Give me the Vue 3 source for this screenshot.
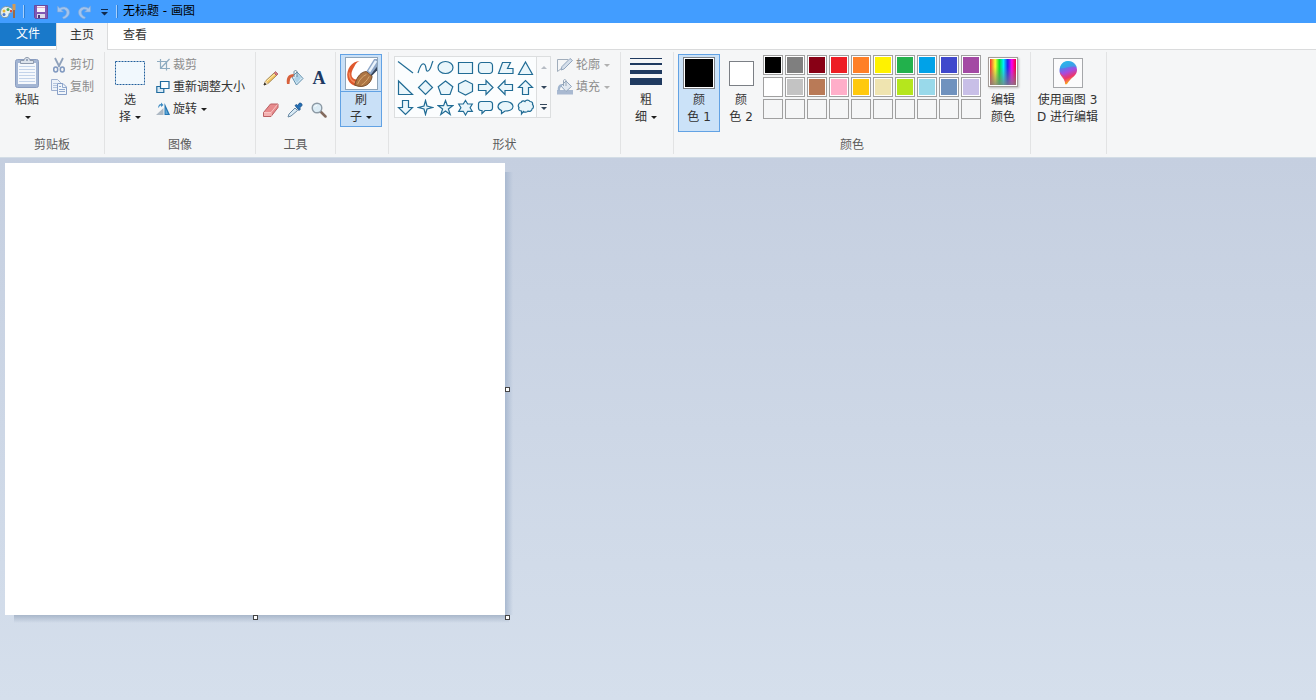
<script setup>
import { ref } from 'vue'

const shapes = [
  { name: '直线', d: 'M1 2.500L16 14' },
  { name: '曲线', d: 'M1 14C3 7 5 4 7 5C10 6 8 13 11 12C14 11 14 6 16 2' },
  { name: '椭圆形', d: 'M1 8.5a7.5 6 0 1 0 15 0a7.5 6 0 1 0 -15 0z' },
  { name: '矩形', d: 'M1.5 3.5h14v11h-14z' },
  { name: '圆角矩形', d: 'M4.5 3.5h8a3 3 0 0 1 3 3v5a3 3 0 0 1 -3 3h-8a3 3 0 0 1 -3 -3v-5a3 3 0 0 1 3 -3z' },
  { name: '多边形', d: 'M5.5 3.5h8l-3 6h5.5v5h-14.5z' },
  { name: '三角形', d: 'M8.5 3L15.5 15.5H1.5z' },
  { name: '直角三角形', d: 'M1.5 2v13.500h14z' },
  { name: '菱形', d: 'M8.500 1.500l7 7l-7 7l-7 -7z' },
  { name: '五边形', d: 'M8.500 2l7.300 5.700l-2.800 7.800h-9l-2.800 -7.800z' },
  { name: '六边形', d: 'M8.500 1.500l7 3.500v7.500l-7 3.500l-7 -3.500v-7.500z' },
  { name: '右箭头', d: 'M1.500 5.500h7.500v-4l7 7l-7 7v-4h-7.500z' },
  { name: '左箭头', d: 'M15.500 5.500h-7.500v-4l-7 7l7 7v-4h7.500z' },
  { name: '上箭头', d: 'M5.500 15.500v-7h-4l7 -7l7 7h-4v7z' },
  { name: '下箭头', d: 'M5.500 1.500v7h-4l7 7l7 -7h-4v-7z' },
  { name: '四角星形', d: 'M8.500 1.500l1.500 5.500l5.500 1.500l-5.500 1.500l-1.500 5.500l-1.500 -5.500l-5.500 -1.500l5.500 -1.500z' },
  { name: '五角星形', d: 'M8.500 1.500l1.900 5.200h5.300l-4.300 3.300l1.800 5.500l-4.700 -3.400l-4.700 3.400l1.800 -5.500l-4.300 -3.300h5.300z' },
  { name: '六角星形', d: 'M8.500 1.500l2.200 3.500h4.600l-2.200 3.700l2.200 3.600h-4.600l-2.200 3.700l-2.200 -3.700h-4.600l2.200 -3.600l-2.200 -3.700h4.600z' },
  { name: '圆角矩形标注', d: 'M4 2.500h9a2.500 2.500 0 0 1 2.500 2.500v4a2.500 2.500 0 0 1 -2.500 2.500h-5l-3 3v-3h-1a2.500 2.500 0 0 1 -2.500 -2.500v-4a2.500 2.500 0 0 1 2.500 -2.500z' },
  { name: '椭圆形标注', d: 'M4.500 14.500v-3C2 10.500 1 9 1 7.500C1 4.500 4.500 2.500 8.500 2.500S16 4.500 16 7.500C16 10.500 12 12 8 12z' },
  { name: '云形标注', d: 'M4 3.500c1 -2 3 -2 4 -1c1 -2 4 -1.500 5 0c2 0 3 1.500 2.500 3c1.500 1.500 1 4 -.5 4.500c0 2 -2.500 3 -4 2c-1 1.500 -3.500 1.500 -4.500 .5l-2 2.500v-3c-2 0 -3.500 -1.500 -2.500 -3.500c-1.500 -1.500 -.5 -4.500 2 -5z' },
]

const palette = [
  '#000000', '#7f7f7f', '#880015', '#ed1c24', '#ff7f27', '#fff200', '#22b14c', '#00a2e8', '#3f48cc', '#a349a4',
  '#ffffff', '#c3c3c3', '#b97a57', '#ffaec9', '#ffc90e', '#efe4b0', '#b5e61d', '#99d9ea', '#7092be', '#c8bfe7',
  null, null, null, null, null, null, null, null, null, null,
]

const color1 = ref('#000000')
const color2 = ref('#ffffff')
const active = ref(1)

function pick(c) {
  if (!c) return
  if (active.value === 1) color1.value = c
  else color2.value = c
}
</script>

<template>
  <div class="app">
    <header class="titlebar">
      <svg class="logo" width="17" height="17" viewBox="0 0 17 17">
        <path d="M1 12C-1 6 4 2 9 4C14 5 14 10 10 10C8 10 10 14 6 14.500C3 15 2 14 1 12z" fill="#e4eef3" stroke="#7e98a4" />
        <circle cx="4" cy="8" r="1.500" fill="#e8b83a" /><circle cx="8" cy="6.500" r="1.500" fill="#48a85a" />
        <circle cx="4" cy="11.500" r="1.500" fill="#4b79cc" /><circle cx="11" cy="8" r="1.200" fill="#da5040" />
        <path d="M12.500 1h3v6h-3z" fill="#d39a55" /><path d="M13 7h2v8h-2z" fill="#9c6a45" />
      </svg>
      <span class="bar"></span>
      <button class="quick" aria-label="保存">
        <svg width="16" height="16" viewBox="0 0 16 16"><path d="M1.500 1.500h13v13h-12l-1 -1z" fill="#8159b5" stroke="#6a4a9c" /><path d="M4 2h8v6h-8z" fill="#f6f4fb" /><path d="M4 3h8v1h-8z" fill="#e4a4c4" /><path d="M4 10h8v4h-8z" fill="#ddd9e8" /><path d="M5 11h2v3h-2z" fill="#4d3b7c" /></svg>
      </button>
      <button class="quick" aria-label="撤消">
        <svg width="16" height="16" viewBox="0 0 16 16"><path d="M2.500 2v6h6L6.300 5.900C9 4.500 11.500 6 11.500 8.500C11.500 11 9.500 12.500 7.500 13.200L8.500 15C12 14 14.500 11.500 14.500 8.300C14.500 3.800 9 1.300 4.700 4.200z" fill="#a4c4ec" stroke="#7ba6da" stroke-width=".6" /></svg>
      </button>
      <button class="quick" aria-label="重做">
        <svg width="16" height="16" viewBox="0 0 16 16"><path d="M13.500 2v6h-6l2.200 -2.100C7 4.500 4.500 6 4.500 8.500C4.500 11 6.500 12.500 8.500 13.200L7.500 15C4 14 1.500 11.500 1.500 8.300C1.500 3.800 7 1.300 11.300 4.200z" fill="#a4c4ec" stroke="#7ba6da" stroke-width=".6" /></svg>
      </button>
      <button class="quick more" aria-label="自定义快速访问工具栏">
        <svg width="9" height="9" viewBox="0 0 9 9"><path d="M1 2h7v1h-7zM1 5h7L4.500 8.500z" fill="#102a4c" /></svg>
      </button>
      <span class="bar"></span>
      <h1 class="title">无标题 - 画图</h1>
    </header>

    <nav class="tabs">
      <button class="tab file">文件</button>
      <button class="tab current">主页</button>
      <button class="tab">查看</button>
    </nav>

    <div class="ribbon">
      <section class="group clipboard">
        <div class="body">
          <button class="big paste">
            <svg width="32" height="32" viewBox="0 0 32 32">
              <rect x="4.500" y="3.500" width="23" height="28" rx="2" fill="#a3b5d3" stroke="#8a9dc0" />
              <path d="M7 7h18v21h-18z" fill="#f5f8fc" />
              <path d="M8 10.500h16M8 13.500h16M8 16.500h16M8 19.500h16M8 22.500h16M8 25.500h16" stroke="#c3d3ea" />
              <path d="M9.500 7.500v-3h3.500c0 -4 6 -4 6 0h3.500v3z" fill="#dce3ec" stroke="#8e9aae" /><circle cx="16" cy="4" r="1" fill="#8494ae" />
            </svg>
            <span>粘贴</span>
            <span class="tick"><i class="arrow"></i></span>
          </button>
          <div class="stack">
            <button class="small" disabled>
              <svg width="16" height="16" viewBox="0 0 16 16"><path d="M4 1l4.500 9M12 1L7.500 10" stroke="#8fa1bb" stroke-width="1.800" fill="none" /><ellipse cx="4.700" cy="12.500" rx="2" ry="2.500" fill="none" stroke="#8199c0" stroke-width="1.500" /><ellipse cx="11.300" cy="12.500" rx="2" ry="2.500" fill="none" stroke="#8199c0" stroke-width="1.500" /></svg>
              <span>剪切</span>
            </button>
            <button class="small" disabled>
              <svg width="16" height="16" viewBox="0 0 16 16"><path d="M.5 .5h6l3 3v8h-9z" fill="#edf2f9" stroke="#9dafcf" /><path d="M2 4.500h4M2 6.500h4M2 8.500h4" stroke="#b6c6df" /><path d="M6.500 4.500h5.500l3.500 3.500v7.500h-9z" fill="#f1f5fa" stroke="#879fc7" /><path d="M11.500 4.500v4h4M8 10.500h6M8 12.500h6M8 7.500h2" stroke="#91a9ce" fill="none" /></svg>
              <span>复制</span>
            </button>
          </div>
        </div>
        <h2>剪贴板</h2>
      </section>

      <section class="group image">
        <div class="body">
          <button class="big select">
            <svg width="32" height="32" viewBox="0 0 32 32"><rect x="1.500" y="5.500" width="29" height="23" fill="#f1f8fd" stroke="#215f9c" stroke-dasharray="2 1" /></svg>
            <span>选</span>
            <span class="tick">择<i class="arrow"></i></span>
          </button>
          <div class="stack">
            <button class="small" disabled>
              <svg width="16" height="16" viewBox="0 0 16 16"><path d="M1 4.500h9.500v9M4.500 2v9.500h9.500M4.500 11.500L13.500 2" fill="none" stroke="#8eabc0" stroke-width="1.200" /></svg>
              <span>裁剪</span>
            </button>
            <button class="small">
              <svg width="16" height="16" viewBox="0 0 16 16"><path d="M.8 7.500h7v6h-7z" fill="#d6e8f4" stroke="#206b9f" stroke-width="1.200" /><path d="M4.500 2.500h8.500v7h-8.500z" fill="#fafdff" stroke="#206b9f" stroke-width="1.200" /></svg>
              <span>重新调整大小</span>
            </button>
            <button class="small">
              <svg width="16" height="16" viewBox="0 0 16 16"><path d="M0 14h7.500V7z" fill="#aeb9c4" /><path d="M8.500 2l5.500 12H8.500z" fill="#2676b2" /><path d="M9.500 7l2.500 6H9.500z" fill="#62a9d8" /><path d="M2 6.500C2.500 4 3.500 3 5 3V1.500L7.500 4L5 6V4.500C4 4.500 3.500 5 3 6.500z" fill="#3f8cc3" /></svg>
              <span>旋转</span><i class="arrow"></i>
            </button>
          </div>
        </div>
        <h2>图像</h2>
      </section>

      <section class="group tools">
        <div class="body">
          <button aria-label="铅笔">
            <svg width="16" height="16" viewBox="0 0 16 16"><path d="M1 15l1.500 -4L11 3l2.500 2.500L5 13.500z" fill="#f3c665" stroke="#93733c" stroke-width=".8" /><path d="M11 3l1.500 -1.500L15 4L13.500 5.500z" fill="#d9777e" stroke="#9d555c" stroke-width=".7" /><path d="M1 15l1.500 -4l2.500 2.500z" fill="#e8d7b7" /><path d="M1 15l.7 -2l1.300 1.300z" fill="#222" stroke="#222" stroke-width=".6" /><path d="M3.500 11.300L12 3.800" stroke="#fff0b7" /></svg>
          </button>
          <button aria-label="用颜色填充">
            <svg width="18" height="18" viewBox="0 0 18 18"><path d="M6 8l5 -5l6 6.500l-6.500 6.500z" fill="#d9ebf5" stroke="#5c8dac" /><path d="M8 10l4 -5l3 4l-4 5z" fill="#acd1e8" /><path d="M8 8V3c0 -2 3 -2 3 0v5" fill="none" stroke="#68899d" /><path d="M1 15C0 9 2 5 8 5L7 8C4 8 4 11 3.500 15z" fill="#d7613c" /></svg>
          </button>
          <button class="letter" aria-label="文本">A</button>
          <button aria-label="橡皮擦">
            <svg width="18" height="18" viewBox="0 0 18 18"><path d="M1.500 11.500L8.500 3h7.500v3.500L9 15.500H1.500z" fill="#e78a8c" stroke="#b95f62" /><path d="M2 11.500h7L15.500 3.500M9 11.500v3.500" fill="none" stroke="#f8c5c4" /><path d="M2 12h6.500v3H2z" fill="#f3b1b1" /></svg>
          </button>
          <button aria-label="颜色选取器">
            <svg width="16" height="16" viewBox="0 0 16 16"><path d="M1 15l1 -3L8 6l2.500 2.500L4 14z" fill="#d9eaf5" stroke="#6b8ba5" /><path d="M8 3.500l1.500 -1l1 1L12 1.500C13.500 .3 16 2 14.700 4L12.500 6l1 1l-1.500 1.500z" fill="#246fb4" stroke="#174c87" stroke-width=".8" /></svg>
          </button>
          <button aria-label="放大镜">
            <svg width="16" height="16" viewBox="0 0 16 16"><path d="M9.500 9.500l5 5" stroke="#826b5e" stroke-width="2.500" stroke-linecap="round" /><circle cx="6" cy="6" r="4.800" fill="#dcecf5" stroke="#8d9aa5" stroke-width="1.400" /><path d="M3.500 5c.5 -1 1.500 -1.500 2.500 -1.500" fill="none" stroke="#fff" /></svg>
          </button>
        </div>
        <h2>工具</h2>
      </section>

      <section class="group brushes">
        <div class="body">
          <button class="big brush">
            <span class="brush-pic">
              <svg width="31" height="31" viewBox="0 0 32 32">
                <rect width="32" height="32" fill="#fff" />
                <path d="M14 3C11 4 10 6 8.500 9C6 13 5 16 6 19C8 23 12 23 16 20L20 27C11 31 3 28 1.500 20C0 12 6 3 14 3z" fill="#df582d" />
                <path d="M3.500 15C3 22 8 27 14 25" stroke="#f28a5b" stroke-width="1.500" fill="none" />
                <path d="M21 14L29 1h3v11l-6 6z" fill="#8da6c7" /><path d="M24 14l7 -11" stroke="#eaf3fc" stroke-width="2.500" /><path d="M25 18l7 -9v4l-6 6z" fill="#35455d" />
                <path d="M9 28C11 19 16 14 21 14L27 19C26 27 18 32 9 28z" fill="#ad7543" stroke="#775030" />
                <path d="M12 27c2 -5 5 -8 9 -10M16 28c3 -2 6 -5 8 -9" stroke="#d9aa73" fill="none" />
              </svg>
            </span>
            <span>刷</span>
            <span class="tick">子<i class="arrow"></i></span>
          </button>
        </div>
      </section>

      <section class="group shapes">
        <div class="body">
          <div class="gallery">
            <div class="shape-grid">
              <button v-for="s in shapes" :key="s.name" :aria-label="s.name">
                <svg width="17" height="17" viewBox="0 0 17 17"><path :d="s.d" /></svg>
              </button>
            </div>
            <div class="scroll">
              <button disabled aria-label="向上滚动"><i class="arrow up"></i></button>
              <button aria-label="向下滚动"><i class="arrow"></i></button>
              <button class="expand" aria-label="更多形状"><i class="arrow"></i></button>
            </div>
          </div>
          <div class="stack">
            <button class="small" disabled>
              <svg width="16" height="16" viewBox="0 0 16 16"><path d="M11 2.500H.5v12L14 4" fill="none" stroke="#a1adbb" /><path d="M4 13l1 -3.500L13 1.500l2.500 2L7 12z" fill="#d4deea" stroke="#92a5bd" /></svg>
              <span>轮廓</span><i class="arrow"></i>
            </button>
            <button class="small" disabled>
              <svg width="16" height="16" viewBox="0 0 16 16"><path d="M0 11h16v4.500H0z" fill="#a9b9d1" /><path d="M4 7l5 -5l5.500 5.500l-5.500 5z" fill="#e2e9f1" stroke="#90a5bd" /><path d="M6.500 7V2c0 -2 2.500 -2 2.500 0v5" fill="none" stroke="#95a6b8" /><path d="M1 12C0 8 2 5 5 5v2C3 8 3 10 3 12z" fill="#a1b5ce" /></svg>
              <span>填充</span><i class="arrow"></i>
            </button>
          </div>
        </div>
        <h2>形状</h2>
      </section>

      <section class="group size">
        <div class="body">
          <button class="big">
            <svg width="32" height="32" viewBox="0 0 32 32"><path d="M0 2h32v1H0zM0 7h32v2H0zM0 14h32v4H0zM0 22h32v7H0z" fill="#1f3a60" /></svg>
            <span>粗</span>
            <span class="tick">细<i class="arrow"></i></span>
          </button>
        </div>
      </section>

      <section class="group colors">
        <div class="body">
          <button class="big well" :class="{ on: active === 1 }" @click="active = 1">
            <span class="sample"><i class="chip" :style="{ background: color1 }"></i></span>
            <span>颜</span>
            <span>色 1</span>
          </button>
          <button class="big well" :class="{ on: active === 2 }" @click="active = 2">
            <span class="sample"><i class="chip little" :style="{ background: color2 }"></i></span>
            <span>颜</span>
            <span>色 2</span>
          </button>
          <div class="palette">
            <button v-for="(c, i) in palette" :key="i" :class="{ filled: c }" :aria-label="c || '空白颜色'" @click="pick(c)">
              <i v-if="c" :style="{ background: c }"></i>
            </button>
          </div>
          <button class="big edit">
            <span class="sample"><i class="rainbow"></i></span>
            <span>编辑</span>
            <span>颜色</span>
          </button>
        </div>
        <h2>颜色</h2>
      </section>

      <section class="group threed">
        <div class="body">
          <button class="big">
            <svg width="32" height="32" viewBox="0 0 32 32">
              <defs>
                <linearGradient id="dropFill" x1="0" y1="0" x2=".3" y2="1"><stop offset="0" stop-color="#25c8ec" /><stop offset=".3" stop-color="#4a83ec" /><stop offset=".55" stop-color="#a64be0" /><stop offset=".78" stop-color="#ec356f" /><stop offset="1" stop-color="#fba820" /></linearGradient>
              </defs>
              <rect x="1.500" y="2.500" width="29" height="29" fill="#fbfbfc" stroke="#a5a7aa" />
              <path d="M16 5C21 5 25 9 25 14C25 20 19 21 15 28C13.500 29 13 28 13 27C13 21 7 20 7.500 14C8 9 11 5 16 5z" fill="url(#dropFill)" />
              <path d="M8 12C9 7 13 5 16 5C21 5 24 8 25 12C21 8 14 13 8 12z" fill="#27bde8" opacity=".6" />
              <path d="M8 16C10 20 14 19 13.500 27C12 22 8 20 8 16z" fill="#f44862" opacity=".7" />
            </svg>
            <span>使用画图 3</span>
            <span>D 进行编辑</span>
          </button>
        </div>
      </section>
    </div>

    <main class="work">
      <div class="paper">
        <i class="handle right"></i>
        <i class="handle bottom"></i>
        <i class="handle corner"></i>
      </div>
    </main>
  </div>
</template>

<style>
body { margin: 0; }
</style>

<style scoped>
.app {
  min-height: 100vh;
  display: flex;
  flex-direction: column;
  font: 12px/17px "DejaVu Sans", "Noto Sans CJK SC", sans-serif;
  color: #333;
}
button {
  margin: 0;
  padding: 0;
  border: 0;
  background: none;
  font: inherit;
  color: inherit;
}
svg { display: block; flex: none; }
h1, h2 { margin: 0; font: inherit; }

.titlebar {
  height: 23px;
  display: flex;
  align-items: center;
  background: #429dff;
  color: #000;
}
.logo { margin-right: 6px; }
.bar { width: 1px; height: 13px; background: #a9d0fb; box-shadow: 1px 0 #2c7fd6; }
.quick { width: 22px; height: 22px; display: grid; place-items: center; }
.bar + .quick { margin-left: 6px; }
.more { width: 16px; margin-right: 4px; }
.title { margin-left: 6px; }

.tabs {
  height: 26px;
  display: flex;
  align-items: flex-start;
  background: #fff;
  border-bottom: 1px solid #dadbdc;
}
.tab { width: 54px; height: 25px; }
.tab.file { width: 56px; height: 23px; background: #1979ca; color: #fff; }
.tab.current {
  width: 52px;
  height: 27px;
  padding-bottom: 2px;
  background: #f5f6f7;
  border: solid #dadbdc;
  border-width: 0 1px;
  position: relative;
}

.ribbon {
  display: flex;
  padding: 2px 0 3px;
  background: #f5f6f7;
  border-bottom: 1px solid #d3dde6;
}
.group {
  box-sizing: border-box;
  height: 102px;
  display: flex;
  flex-direction: column;
  border-right: 1px solid #e2e3e4;
}
.body { display: flex; align-items: flex-start; height: 85px; padding-top: 2px; box-sizing: border-box; }
.group h2 { text-align: center; color: #5c5c5c; }
.stack { display: flex; flex-direction: column; align-items: flex-start; }

.big {
  display: flex;
  flex-direction: column;
  align-items: center;
  white-space: nowrap;
  padding: 2px 0 4px;
}
.big > svg, .sample { margin-bottom: 4px; }
.tick { display: flex; align-items: center; gap: 4px; min-height: 17px; }
.small { height: 22px; display: flex; align-items: center; white-space: nowrap; }
.small span { margin-left: 2px; }
.small .arrow { margin-left: 4px; }
button:disabled { color: #8d8d8d; }
.arrow {
  width: 0;
  height: 0;
  border: solid transparent;
  border-width: 3px 3px 0;
  border-top-color: #1e1e1e;
}
:disabled .arrow { border-top-color: #b0b0b0; }
.arrow.up { border-width: 0 3px 3px; border-bottom-color: #b6bcc4; }

.clipboard .body { padding-left: 10px; padding-right: 10px; }
.paste { width: 34px; margin-right: 7px; }
.paste .tick { margin-left: 2px; }
.clipboard .small span { margin-left: 3px; }

.image .body { padding-left: 9px; padding-right: 10px; }
.select { width: 32px; margin-right: 10px; }
.image .small span { margin-left: 1px; }

.tools .body {
  display: grid;
  grid-template-columns: repeat(3, 24px);
  grid-auto-rows: 32px;
  padding: 10px 4px 0 3px;
  align-content: start;
  align-items: stretch;
}
.tools button { display: grid; place-items: center; }
.tools .letter { font: bold 18px/20px "Liberation Serif", serif; color: #1d3a63; }

.brushes .body { padding-left: 4px; padding-right: 6px; }
.brush {
  width: 42px;
  padding: 0;
  background: #c9e0f7;
  border: 1px solid #62a2e4;
}
.brush-pic {
  align-self: stretch;
  display: flex;
  justify-content: center;
  padding: 2px 0 1px;
  border-bottom: 1px solid #62a2e4;
}
.brush-pic svg { border: 1px solid #8fa5ba; }

.shapes .body { padding: 4px 10px 0 5px; }
.shapes .stack { margin: -2px 0 0 6px; }
.shapes .small span { margin-left: 3px; }
.gallery { display: flex; border: 1px solid #dcdedf; background: #fbfdfe; }
.shape-grid { display: grid; grid-template-columns: repeat(7, 20px); grid-auto-rows: 20px; padding-right: 1px; }
.shape-grid button { display: grid; place-items: center; }
.shape-grid path { fill: #eaf6fb; stroke: #216c95; stroke-width: 1.2; }
.shape-grid button:nth-child(-n+2) path { fill: none; }
.scroll { display: grid; grid-template-rows: repeat(3, 20px); width: 13px; border-left: 1px solid #dcdedf; background: #f8f9fa; }
.scroll button { display: grid; place-items: center; }
.scroll .arrow { border-top-color: #34475c; }
.scroll .expand { align-content: center; row-gap: 2px; }
.expand::before { content: ""; width: 7px; height: 1px; background: #34475c; }

.size .body { padding-left: 9px; padding-right: 11px; }

.colors .body { padding: 2px 8px 0 4px; }
.well { width: 42px; box-sizing: border-box; border: 1px solid transparent; height: 78px; }
.well.on { background: #cbe2f8; border-color: #62a2e4; }
.sample { width: 32px; height: 32px; display: grid; place-items: center; }
.well .sample { margin-bottom: 3px; }
.chip { box-sizing: border-box; width: 32px; height: 32px; border: 1px solid #7b7f85; box-shadow: inset 0 0 0 1px #fff; }
.chip.little { width: 25px; height: 25px; }
.palette {
  display: grid;
  grid-template-columns: repeat(10, 20px);
  grid-auto-rows: 20px;
  gap: 2px;
  margin: 1px 3px 0 1px;
}
.palette button { display: grid; padding: 1px; border: 1px solid #a0a0a0; }
.palette .filled { background: #fff; }
.edit { width: 38px; }
.rainbow {
  width: 26px;
  height: 26px;
  border: 1px solid #fff;
  outline: 1px solid #a39c98;
  box-shadow: 1px 1px 2px 1px #bbb;
  background: linear-gradient(transparent 30%, #808080d0), linear-gradient(90deg, #e33, #ff3 20%, #0d3 36%, #0ef 52%, #22e 68%, #f0e 84%, #e03);
}

.threed .body { padding-left: 6px; padding-right: 8px; }

.work {
  flex: 1;
  padding: 5px;
  background: linear-gradient(#c5cfe0, #d5dfec);
}
.paper { position: relative; width: 500px; height: 452px; background: #fff; }
.paper::before, .paper::after { content: ""; position: absolute; }
.paper::before { left: 100%; top: 9px; bottom: 0; width: 8px; background: linear-gradient(90deg, #a9b9d0, #a9b9d000); }
.paper::after { top: 100%; left: 9px; right: -4px; height: 8px; background: linear-gradient(#a9b7ca, #a9b7ca00); }
.handle { position: absolute; z-index: 1; width: 3px; height: 3px; border: 1px solid #444; background: #fff; }
.right { left: 100%; top: calc(50% - 2px); }
.bottom { top: 100%; left: calc(50% - 2px); }
.corner { left: 100%; top: 100%; }
</style>
